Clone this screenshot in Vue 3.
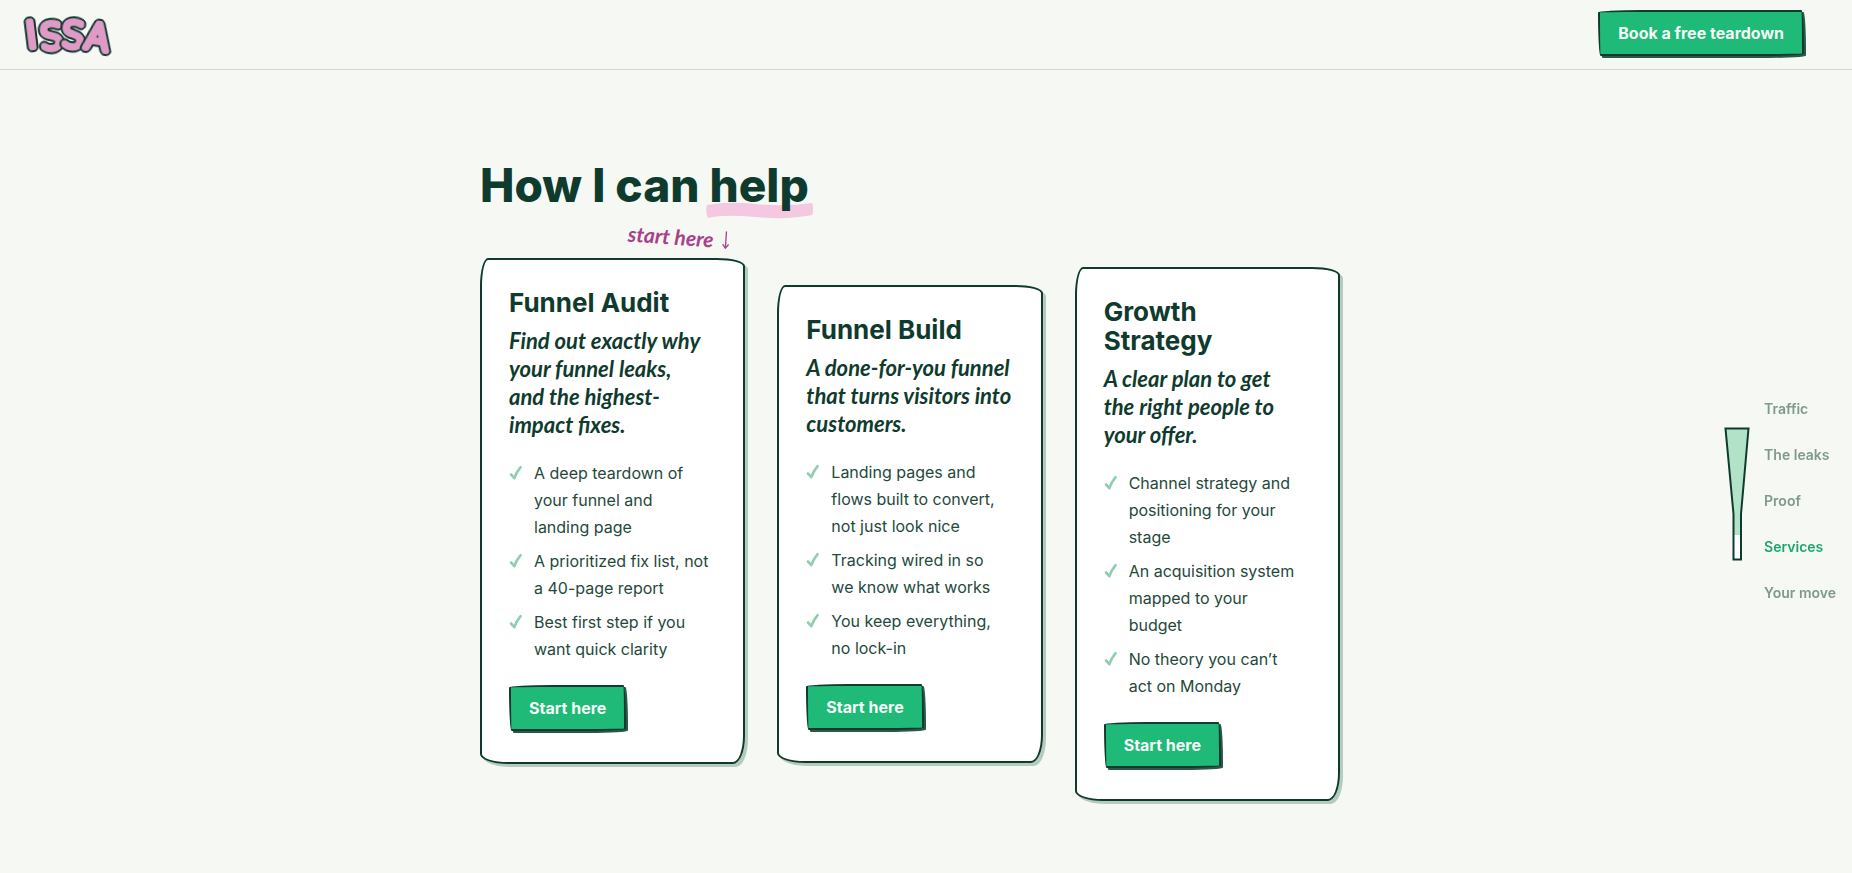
<script setup>
const letters = [
  { ch: 'I', x: 10, y: 39, turn: -7 },
  { ch: 'S', x: 24, y: 41, turn: -4 },
  { ch: 'S', x: 46, y: 39, turn: 4 },
  { ch: 'A', x: 70, y: 41, turn: 9 },
]

const cards = [
  {
    id: 'audit',
    title: 'Funnel Audit',
    lead: 'Find out exactly why\nyour funnel leaks,\nand the highest-\nimpact fixes.',
    points: [
      'A deep teardown of\nyour funnel and\nlanding page',
      'A prioritized fix list, not\na 40-page report',
      'Best first step if you\nwant quick clarity',
    ],
    flag: true,
  },
  {
    id: 'build',
    title: 'Funnel Build',
    lead: 'A done-for-you funnel\nthat turns visitors into\ncustomers.',
    points: [
      'Landing pages and\nflows built to convert,\nnot just look nice',
      'Tracking wired in so\nwe know what works',
      'You keep everything,\nno lock-in',
    ],
  },
  {
    id: 'growth',
    title: 'Growth\nStrategy',
    lead: 'A clear plan to get\nthe right people to\nyour offer.',
    points: [
      'Channel strategy and\npositioning for your\nstage',
      'An acquisition system\nmapped to your\nbudget',
      'No theory you can’t\nact on Monday',
    ],
  },
]

const stops = ['Traffic', 'The leaks', 'Proof', 'Services', 'Your move']
const current = 'Services'
</script>

<template>
  <div class="page">
    <header class="topbar">
      <a class="logo" href="#" aria-label="ISSA">
        <svg width="104" height="52" viewBox="0 0 104 52">
          <text
            v-for="(l, i) in letters"
            :key="i"
            class="logo-letter"
            :x="l.x"
            :y="l.y"
            :transform="`rotate(${l.turn} ${l.x + 8} 26)`"
          >{{ l.ch }}</text>
        </svg>
      </a>
      <a class="btn" href="#book">Book a free teardown</a>
    </header>

    <main class="services">
      <h2 class="heading">
        How I can
        <span class="marked">help<svg class="marker" viewBox="0 0 108 17" preserveAspectRatio="none" aria-hidden="true">
          <path d="M1 3 Q22 -1 50 2 T107 1 Q109 7 107 13 Q82 18 50 15 T2 16 Q-1 9 1 3Z" />
        </svg></span>
      </h2>

      <div class="cards">
        <article v-for="c in cards" :key="c.id" class="card" :class="c.id">
          <p v-if="c.flag" class="flag">
            start here
            <svg width="8" height="18" viewBox="0 0 8 18" aria-hidden="true">
              <path d="M4 0V16M1 13L4 17L7 13" />
            </svg>
          </p>
          <h3 class="title">{{ c.title }}</h3>
          <p class="lead">{{ c.lead }}</p>
          <ul class="points">
            <li v-for="p in c.points" :key="p">
              <svg class="tick" width="14" height="16" viewBox="0 0 14 16" aria-hidden="true">
                <path d="M2 9.5L5.4 13.2Q7.5 7 11.6 2.2" />
              </svg>
              <span>{{ p }}</span>
            </li>
          </ul>
          <a class="btn" href="#book">Start here</a>
        </article>
      </div>
    </main>

    <nav class="progress" aria-label="Sections">
      <svg width="26" height="134" viewBox="0 0 26 134" aria-hidden="true">
        <path class="tube" d="M1.5 1.5H24.5L17 87V132.500H9.500V87Z" />
        <path class="fill" d="M1.500 1.500H24.500L17 87V108H9.500V87Z" />
        <path class="rim" d="M1.500 1.500H24.500L17 87V132.500H9.500V87Z" />
      </svg>
      <ul class="stops">
        <li v-for="s in stops" :key="s">
          <a href="#" :class="{ on: s === current }">{{ s }}</a>
        </li>
      </ul>
    </nav>
  </div>
</template>

<style>
body {
  margin: 0;
  background: #f5f8f3;
}
</style>

<style scoped>
.page {
  min-height: 100vh;
  background: #f5f8f3;
  color: #0f3b2e;
  font-family: Inter, sans-serif;
  font-size: 16px;
}

.topbar {
  display: flex;
  align-items: center;
  justify-content: space-between;
  padding: 8px 48px 9px 16px;
  border-bottom: 1px solid #cfdad3;
}

.logo {
  display: flex;
}

.logo-letter {
  font: 200 35px "DejaVu Sans Light", "DejaVu Sans", sans-serif;
  fill: #e09ac6;
  stroke: #e09ac6;
  stroke-width: 6px;
  stroke-linejoin: round;
  stroke-linecap: round;
  filter: drop-shadow(1px 1px 0 #12382e) drop-shadow(-1px -1px 0 #12382e) drop-shadow(1px -1px 0 #12382e) drop-shadow(-1px 1px 0 #12382e);
}

.btn {
  display: inline-block;
  padding: 0 18px;
  border: 2px solid #0f3b2e;
  border-radius: 255px 15px 225px 15px / 15px 225px 15px 255px;
  background: #1fb978;
  box-shadow: 2px 2px 0 #2d5848;
  color: #f5fbf6;
  font-weight: 700;
  line-height: 42px;
  text-decoration: none;
}

.topbar .btn {
  margin-bottom: 2px;
}

.services {
  max-width: 860px;
  margin: 0 auto;
  padding: 83px 32px 68px 0;
}

.heading {
  margin: 0;
  font-size: 46px;
  font-weight: 800;
  line-height: 64px;
}

.marked {
  position: relative;
  z-index: 0;
  display: inline-block;
}

.marker {
  position: absolute;
  z-index: -1;
  left: -4px;
  right: -4px;
  bottom: -2px;
  width: calc(100% + 8px);
  height: 17px;
  fill: #f4c8e0;
}

.cards {
  display: grid;
  grid-template-columns: repeat(3, 1fr);
  align-items: start;
  gap: 32px;
  margin-top: 41px;
}

.card {
  position: relative;
  padding: 28px 27px 31px;
  border: 2px solid #0f3b2e;
  border-radius: 8px 28px 12px 28px / 28px 8px 28px 10px;
  background: #fff;
  box-shadow: 3px 3px 0 #b5cbc0;
}

.build {
  margin-top: 27px;
}

.growth {
  margin-top: 9px;
}

.flag {
  position: absolute;
  right: 14px;
  top: -35px;
  display: flex;
  align-items: center;
  gap: 8px;
  margin: 0;
  color: #a8408a;
  font: italic 700 21px/24px Lato, sans-serif;
  transform: rotate(4deg);
}

.flag svg {
  fill: none;
  stroke: #a8408a;
  stroke-width: 1.3;
}

.title {
  margin: 0;
  font-size: 26px;
  font-weight: 700;
  line-height: 29px;
  white-space: pre-line;
}

.lead {
  margin: 10px 0 21px;
  font: italic 700 22px/28px Lato, sans-serif;
  white-space: pre-line;
}

.points {
  display: grid;
  gap: 7px;
  margin: 0 0 22px;
  padding: 0;
  list-style: none;
  line-height: 27px;
  white-space: pre-line;
}

.points li {
  display: flex;
  align-items: flex-start;
  gap: 11px;
  color: #24493c;
}

.tick {
  flex: none;
  margin-top: 5px;
  fill: none;
  stroke: #8fceae;
  stroke-width: 2.6;
  stroke-linecap: round;
  stroke-linejoin: round;
}

.progress {
  position: fixed;
  top: 129px;
  right: 16px;
  bottom: 0;
  display: flex;
  align-items: center;
  gap: 14px;
}

.progress svg {
  margin-bottom: 14px;
}

.tube {
  fill: #fff;
}

.fill {
  fill: #b2e3c8;
}

.rim {
  fill: none;
  stroke: #0f3b2e;
  stroke-width: 2;
}

.stops {
  display: grid;
  gap: 22px;
  margin: 0;
  padding: 0;
  list-style: none;
  font-size: 14px;
  font-weight: 600;
  line-height: 24px;
}

.stops a {
  color: #7f9a8c;
  text-decoration: none;
}

.stops .on {
  color: #1fa56f;
}
</style>
